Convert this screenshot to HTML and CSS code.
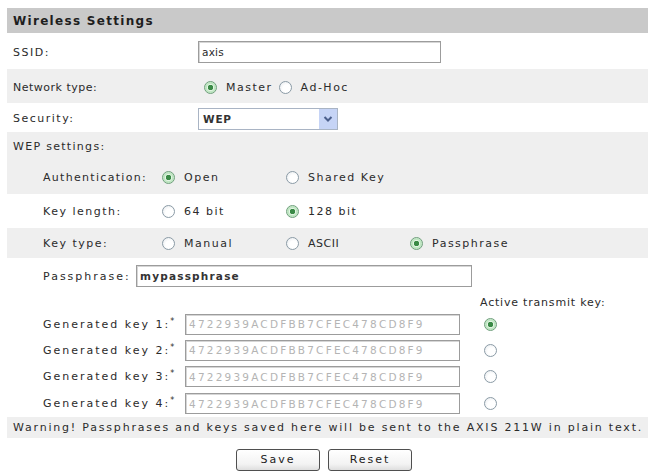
FILE: index.html
```html
<!DOCTYPE html>
<html>
<head>
<meta charset="utf-8">
<link rel="stylesheet" href="styles.css">
</head>
<body>
<div class="page">
  <div class="hdr">Wireless Settings</div>

  <div class="row r-ssid">
    <span class="lbl">SSID:</span>
    <span class="field f-ssid">axis</span>
  </div>

  <div class="row alt r-net">
    <span class="lbl l-net">Network type:</span>
    <span class="opt o-master"><i class="radio on"></i>Master</span>
    <span class="opt"><i class="radio"></i>Ad-Hoc</span>
  </div>

  <div class="row r-sec">
    <span class="lbl">Security:</span>
    <span class="select">WEP<i class="arrow"><svg width="10" height="8" viewBox="0 0 10 8"><path d="M1.5 2 L5 5.5 L8.5 2" fill="none" stroke="#4b5f8c" stroke-width="2"/></svg></i></span>
  </div>

  <div class="alt wep">
    <div class="wep-title">WEP settings:</div>
    <div class="sub s-auth">
      <span class="slbl l-auth">Authentication:</span>
      <span class="col"><i class="radio on"></i>Open</span>
      <span class="col"><i class="radio"></i>Shared Key</span>
    </div>
  </div>

  <div class="sub s-len">
    <span class="slbl">Key length:</span>
    <span class="col"><i class="radio"></i>64 bit</span>
    <span class="col"><i class="radio on"></i>128 bit</span>
  </div>

  <div class="sub alt s-type">
    <span class="slbl">Key type:</span>
    <span class="col"><i class="radio"></i>Manual</span>
    <span class="col c-ascii"><i class="radio"></i>ASCII</span>
    <span class="col"><i class="radio on"></i>Passphrase</span>
  </div>

  <div class="pass">
    <span class="plbl">Passphrase:</span>
    <span class="field f-pass">mypassphrase</span>
  </div>

  <div class="active">Active transmit key:</div>

  <div class="keys">
    <div class="key">
      <span class="klbl">Generated key 1:<sup>*</sup></span>
      <span class="field f-key">4722939ACDFBB7CFEC478CD8F9</span>
      <i class="radio on"></i>
    </div>
    <div class="key">
      <span class="klbl">Generated key 2:<sup>*</sup></span>
      <span class="field f-key">4722939ACDFBB7CFEC478CD8F9</span>
      <i class="radio"></i>
    </div>
    <div class="key">
      <span class="klbl">Generated key 3:<sup>*</sup></span>
      <span class="field f-key">4722939ACDFBB7CFEC478CD8F9</span>
      <i class="radio"></i>
    </div>
    <div class="key">
      <span class="klbl">Generated key 4:<sup>*</sup></span>
      <span class="field f-key">4722939ACDFBB7CFEC478CD8F9</span>
      <i class="radio"></i>
    </div>
  </div>

  <div class="warn">Warning! Passphrases and keys saved here will be sent to the AXIS 211W in plain text.</div>

  <div class="btns">
    <span class="btn">Save</span>
    <span class="btn">Reset</span>
  </div>
</div>
</body>
</html>
```

FILE: styles.css
```css
html, body {
  margin: 0;
  padding: 0;
  background: #ffffff;
}

body {
  font-family: "DejaVu Sans", Verdana, sans-serif;
  font-size: 11px;
  color: #2b2b2b;
  letter-spacing: 1.5px;
}

.page {
  padding: 8px 0 0 7px;
  display: flex;
  flex-direction: column;
}

.hdr {
  height: 25px;
  line-height: 26px;
  background: #c9c9c9;
  font-weight: bold;
  font-size: 12px;
  letter-spacing: 1.3px;
  padding-left: 6px;
  color: #1e1e1e;
}

.row {
  display: flex;
  align-items: center;
}

.alt {
  background: #efefef;
}

.lbl {
  width: 185px;
  padding-left: 6px;
  flex: none;
  white-space: nowrap;
}

.l-net { letter-spacing: 0.5px; }

.r-ssid { height: 36px; padding-top: 2px; box-sizing: border-box; }
.r-net { height: 34px; padding-top: 3px; box-sizing: border-box; }
.r-sec { height: 29px; padding-top: 2px; box-sizing: border-box; }

.field {
  display: flex;
  align-items: center;
  box-sizing: border-box;
  border: 1px solid #9c9c9c;
  box-shadow: inset 1px 1px 0 #d6d6d6;
  background: #fff;
  padding-left: 3px;
  font-size: 10.5px;
}

.f-ssid {
  width: 243px;
  height: 22px;
  letter-spacing: 0.2px;
}

.opt {
  display: flex;
  align-items: center;
}

.o-master {
  margin-left: 6px;
  margin-right: 6px;
}

.radio {
  display: inline-block;
  box-sizing: border-box;
  width: 13px;
  height: 13px;
  border-radius: 50%;
  border: 1px solid #8b9ba6;
  background: radial-gradient(circle at 60% 60%, #ffffff 40%, #e2e6ea 100%);
  margin-right: 9px;
  flex: none;
  position: relative;
}

.radio.on {
  border-color: #6f9f7c;
  box-shadow: inset 0 0 0 2px #bfe6c2;
  background: radial-gradient(circle, #3a8a46 0 2.5px, #e6f5e7 3px);
}

.select {
  display: flex;
  align-items: center;
  box-sizing: border-box;
  width: 140px;
  height: 22px;
  border: 1px solid #a9b4c4;
  background: #fff;
  padding-left: 4px;
  font-size: 10.5px;
  font-weight: bold;
  letter-spacing: 0.8px;
  color: #333;
  justify-content: space-between;
}

.arrow {
  width: 18px;
  height: 20px;
  background: #c6d4f6;
  border-left: 1px solid #fff;
  display: flex;
  align-items: center;
  justify-content: center;
}

.wep-title {
  height: 28px;
  line-height: 30px;
  padding-left: 6px;
  letter-spacing: 1.3px;
}

.sub {
  display: grid;
  grid-template-columns: 119px 124px 124px auto;
  align-items: center;
  padding-left: 36px;
}

.slbl { white-space: nowrap; }
.l-auth { letter-spacing: 1.3px; }

.col {
  display: flex;
  align-items: center;
  white-space: nowrap;
}

.c-ascii { letter-spacing: 0.5px; }

.s-auth { height: 34px; }
.s-len { height: 34px; }
.s-type { height: 30px; }

.pass {
  display: flex;
  align-items: center;
  padding: 7px 0 5px 36px;
}

.plbl {
  width: 93px;
  flex: none;
  letter-spacing: 2px;
  white-space: nowrap;
}

.f-pass {
  width: 336px;
  height: 22px;
  letter-spacing: 1.2px;
  font-weight: bold;
  color: #333;
}

.active {
  height: 19px;
  line-height: 21px;
  padding-left: 473px;
  letter-spacing: 0.8px;
  white-space: nowrap;
}

.keys {
  display: flex;
  flex-direction: column;
}

.key {
  display: flex;
  align-items: center;
  height: 26px;
  padding-left: 36px;
}

.key:nth-child(n+3) {
  height: 27px;
}

.klbl {
  width: 142px;
  flex: none;
  white-space: nowrap;
  letter-spacing: 2px;
}

.klbl sup {
  font-size: 8px;
  vertical-align: 4px;
  line-height: 0;
  margin-left: 0;
}

.f-key {
  width: 275px;
  height: 21px;
  color: #b4b4b4;
  letter-spacing: 2.2px;
  margin-right: 24px;
}

.warn {
  height: 21px;
  line-height: 22px;
  background: #efefef;
  padding-left: 6px;
  white-space: nowrap;
  letter-spacing: 1.8px;
}

.btns {
  display: flex;
  justify-content: center;
  gap: 8px;
  padding-top: 11px;
  padding-right: 7px;
}

.btn {
  box-sizing: border-box;
  width: 84px;
  height: 22px;
  line-height: 20px;
  text-align: center;
  border: 1px solid #4f4f4f;
  border-radius: 3px;
  background: linear-gradient(#ffffff, #f3f3f3 70%, #dedede);
  letter-spacing: 2px;
  color: #222;
}
```
